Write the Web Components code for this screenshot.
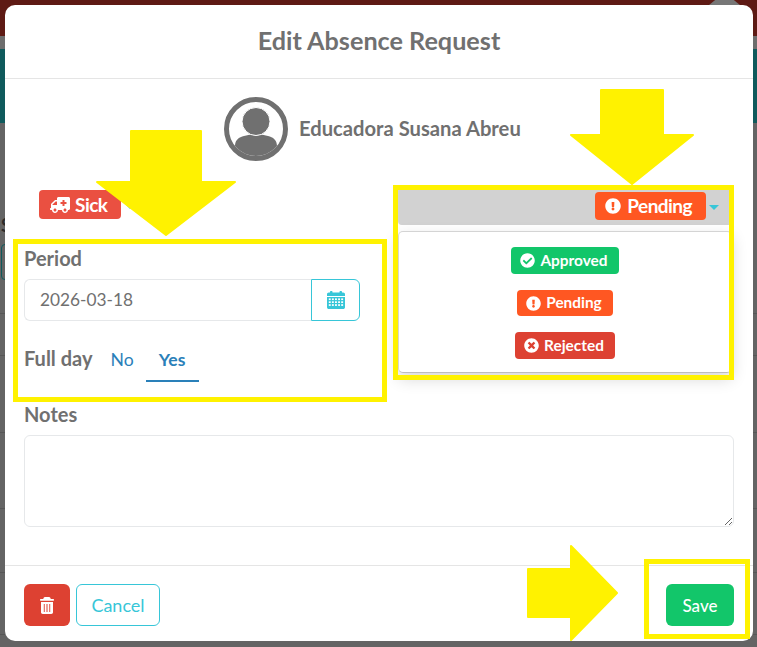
<!DOCTYPE html>
<html lang="en">
<head>
<meta charset="utf-8">
<title>Edit Absence Request</title>
<style>
html,body{margin:0;padding:0;width:757px;height:647px;overflow:hidden;font-family:Lato,"Liberation Sans",sans-serif;color:#707070}
</style>
</head>
<body>
<app-backdrop>
  <absence-modal></absence-modal>
  <yellow-arrow dir="down" style="left:96px;top:130px"></yellow-arrow>
  <yellow-arrow dir="down2" style="left:570px;top:89px"></yellow-arrow>
  <yellow-arrow dir="right" style="left:527px;top:545px"></yellow-arrow>
  <yellow-frame style="left:13px;top:239px;width:374px;height:163px"></yellow-frame>
  <yellow-frame style="left:393px;top:185px;width:341px;height:195px"></yellow-frame>
  <yellow-frame style="left:644px;top:559px;width:106px;height:80px"></yellow-frame>
</app-backdrop>

<script>
const ICONS = {
  ambulance:['0 0 640 512','M624 352h-16V243.9c0-12.7-5.1-24.9-14.1-33.9L494 110.1c-9-9-21.2-14.1-33.9-14.1H416V48c0-26.5-21.5-48-48-48H48C21.5 0 0 21.5 0 48v320c0 26.5 21.5 48 48 48h16c0 53 43 96 96 96s96-43 96-96h128c0 53 43 96 96 96s96-43 96-96h48c8.8 0 16-7.2 16-16v-32c0-8.8-7.2-16-16-16zM160 464c-26.5 0-48-21.5-48-48s21.5-48 48-48 48 21.5 48 48-21.5 48-48 48zm144-248c0 4.4-3.6 8-8 8h-56v56c0 4.4-3.6 8-8 8h-48c-4.4 0-8-3.6-8-8v-56h-56c-4.4 0-8-3.6-8-8v-48c0-4.4 3.6-8 8-8h56v-56c0-4.4 3.6-8 8-8h48c4.4 0 8 3.6 8 8v56h56c4.4 0 8 3.6 8 8v48zm176 248c-26.5 0-48-21.5-48-48s21.5-48 48-48 48 21.5 48 48-21.5 48-48 48zm80-208H416V144h44.1l99.9 99.9V256z'],
  check:['0 0 512 512','M504 256c0 136.967-111.033 248-248 248S8 392.967 8 256 119.033 8 256 8s248 111.033 248 248zM227.314 387.314l184-184c6.248-6.248 6.248-16.379 0-22.627l-22.627-22.627c-6.248-6.249-16.379-6.249-22.628 0L216 308.118l-70.059-70.059c-6.248-6.248-16.379-6.248-22.628 0l-22.627 22.627c-6.248 6.248-6.248 16.379 0 22.627l104 104c6.249 6.249 16.379 6.249 22.628.001z'],
  excl:['0 0 512 512','M504 256c0 136.997-111.043 248-248 248S8 392.997 8 256C8 119.083 119.043 8 256 8s248 111.083 248 248zm-248 50c-25.405 0-46 20.595-46 46s20.595 46 46 46 46-20.595 46-46-20.595-46-46-46zm-43.673-165.346l7.418 136c.347 6.364 5.609 11.346 11.982 11.346h48.546c6.373 0 11.635-4.982 11.982-11.346l7.418-136c.375-6.874-5.098-12.654-11.982-12.654h-63.383c-6.884 0-12.356 5.78-11.981 12.654z'],
  times:['0 0 512 512','M256 8C119 8 8 119 8 256s111 248 248 248 248-111 248-248S393 8 256 8zm121.6 313.1c4.7 4.7 4.7 12.3 0 17L338 377.6c-4.7 4.7-12.3 4.7-17 0L256 312l-65.1 65.6c-4.7 4.7-12.3 4.7-17 0L134.4 338c-4.7-4.7-4.7-12.3 0-17l65.6-65-65.6-65.1c-4.7-4.7-4.7-12.3 0-17l39.6-39.6c4.7-4.7 12.3-4.7 17 0l65 65.7 65.1-65.6c4.7-4.7 12.3-4.7 17 0l39.6 39.6c4.7 4.7 4.7 12.3 0 17L312 256l65.6 65.1z']
};
function faSvg(name,size,extra=''){
  const [vb,d]=ICONS[name];
  return `<svg viewBox="${vb}" height="${size}" fill="currentColor" style="display:block;flex:none;${extra}"><path fill-rule="evenodd" d="${d}"/></svg>`;
}

class AppBackdrop extends HTMLElement{
  constructor(){super();this.attachShadow({mode:'open'}).innerHTML=`<style>
    :host{display:flex;position:relative;box-sizing:border-box;width:757px;height:647px;padding:5px 4px 6px 5px;overflow:hidden;
      background:
       linear-gradient(#565656,#565656) 0 313px/100% 1px no-repeat,
       linear-gradient(#565656,#565656) 0 355px/100% 1px no-repeat,
       linear-gradient(#565656,#565656) 0 432px/100% 1px no-repeat,
       linear-gradient(#565656,#565656) 0 508px/100% 1px no-repeat,
       linear-gradient(#565656,#565656) 0 572px/100% 1px no-repeat,
       linear-gradient(#565656,#565656) 0 634px/100% 1px no-repeat,
       linear-gradient(#5e1a14 0 36px,#6d6d6d 36px 49px,#0f5a5c 49px 123px,#646464 123px);}
    .cap{position:absolute;left:709px;top:0;width:31px;height:5px;background:#777;clip-path:polygon(20% 0,80% 0,100% 100%,0 100%)}
    .s{position:absolute;left:1px;top:214px;font:bold 18px Lato,sans-serif;color:#2b2b2b}
    .box{position:absolute;left:1px;top:244px;width:12px;height:36px;border:1px solid #0f5a5c;border-radius:4px;box-sizing:border-box}
  </style><div class="cap"></div><div class="s">S</div><div class="box"></div><slot></slot>`;}
}

class YellowFrame extends HTMLElement{
  constructor(){super();this.attachShadow({mode:'open'}).innerHTML=`<style>
    :host{display:block;position:absolute;box-sizing:border-box;border:5px solid #fff200;pointer-events:none}
  </style>`;}
}

class YellowArrow extends HTMLElement{
  connectedCallback(){
    const shapes={
      down:[142,107,'1,52 35,52 35,1 105,1 105,52 139,52 70,105'],
      down2:[126,97,'1,46 31,46 31,1 93,1 93,46 123,46 62,95'],
      right:[92,97,'1,24 44,24 44,1 90,48 44,95 44,72 1,72']
    }[this.getAttribute('dir')];
    this.attachShadow({mode:'open'}).innerHTML=`<style>:host{display:block;position:absolute;pointer-events:none}svg{display:block}</style>
    <svg width="${shapes[0]}" height="${shapes[1]}" viewBox="0 0 ${shapes[0]} ${shapes[1]}"><polygon points="${shapes[2]}" fill="#fff200" stroke="#fff200" stroke-width="2" stroke-linejoin="round"/></svg>`;
  }
}

class StatusBadge extends HTMLElement{
  connectedCallback(){
    const icon=this.getAttribute('icon'), sz=+this.getAttribute('isize')||15, flip=this.hasAttribute('flip');
    this.attachShadow({mode:'open'}).innerHTML=`<style>
      :host{display:inline-flex;align-items:center;box-sizing:border-box;border-radius:4px;color:#fff;font-weight:700;white-space:nowrap;
        background:var(--bg);height:var(--h,27px);padding:0 var(--pr,11px) 0 var(--px,9px);gap:var(--gap,5px);font-size:var(--fs,15.4px);letter-spacing:var(--ls,0);line-height:1}
    </style>${faSvg(icon,sz,flip?'transform:scaleX(-1);':'')}<slot></slot>`;
  }
}

class StatusDropdown extends HTMLElement{
  constructor(){super();this.attachShadow({mode:'open'}).innerHTML=`<style>
    :host{display:block}
    .head{display:flex;justify-content:flex-end;align-items:center;height:39px;background:#d2d2d2;border-radius:4px;padding-right:13px;box-sizing:border-box}
    .big{--bg:#ff5722;--h:28px;--px:10px;--pr:14px;--gap:6px;--fs:19px;--ls:-.55px}
    .caret{width:0;height:0;border:5px solid transparent;border-top:5px solid #37c6d8;border-bottom:0;margin:3px 0 0 3px}
    .menu{display:flex;flex-direction:column;align-items:center;gap:16px;box-sizing:border-box;margin-top:6px;height:142px;padding-top:15px;background:#fff;
      border:1px solid #d4d4d4;border-bottom-color:#bdbdbd;border-radius:5px;box-shadow:0 6px 16px rgba(0,0,0,.16)}
    .a{--bg:#12c66a}.p{--bg:#ff5722;--h:26px}.r{--bg:#dd4132}
  </style>
  <div class="head"><status-badge class="big" icon="excl" isize="16">Pending</status-badge><span class="caret"></span></div>
  <div class="menu">
    <status-badge class="a" icon="check">Approved</status-badge>
    <status-badge class="p" icon="excl">Pending</status-badge>
    <status-badge class="r" icon="times">Rejected</status-badge>
  </div>`;}
}

class PeriodField extends HTMLElement{
  constructor(){super();
    let dots='';
    for(let y=0;y<3;y++)for(let x=0;x<5;x++)dots+=`<rect x="${1.8+x*3.1}" y="${7.4+y*2.9}" width="1.9" height="1.7" fill="#fff"/>`;
    this.attachShadow({mode:'open'}).innerHTML=`<style>
    :host{display:block}
    .lab{font-size:20px;line-height:24px;font-weight:700;color:#707070}
    .row{display:flex;height:42px;margin-top:9px}
    .inp{flex:1;box-sizing:border-box;border:1px solid #e6e8ea;border-right:0;border-radius:6px 0 0 6px;padding-left:15px;font-size:17.3px;line-height:40px;color:#707070}
    .btn{box-sizing:border-box;width:49px;border:1px solid #37c6d8;border-radius:0 6px 6px 0;display:flex;align-items:center;justify-content:center}
    .day{display:flex;align-items:center;height:44px;margin-top:17px}
    .day .t{font-size:20px;font-weight:700;color:#707070;margin-right:3px;margin-top:-4px}
    .tab{box-sizing:border-box;height:44px;line-height:44px;padding:0 14px 0 15px;font-size:17.6px;color:#2a80b9}
    .tab.on{font-weight:700;border-bottom:2px solid #2a80b9;margin-left:-2px;width:53px;padding:0;text-align:center}
  </style>
  <div class="lab">Period</div>
  <div class="row"><div class="inp">2026-03-18</div><div class="btn">
    <svg width="18" height="18" viewBox="0 0 18 18"><path fill="#37c6d8" d="M0 16.2V6h18v10.2c0 1-.8 1.8-1.8 1.8H1.8C.8 18 0 17.2 0 16.2zM0 5V3.4c0-1 .8-1.8 1.8-1.8H3V.8C3 .4 3.4 0 3.8 0h.9c.4 0 .8.4.8.8v.8h7V.8c0-.4.4-.8.8-.8h.9c.4 0 .8.4.8.8v.8h1.2c1 0 1.8.8 1.8 1.8V5z"/>${dots}</svg>
  </div></div>
  <div class="day"><span class="t">Full day</span><span class="tab">No</span><span class="tab on">Yes</span></div>`;}
}

class AbsenceModal extends HTMLElement{
  constructor(){super();this.attachShadow({mode:'open'}).innerHTML=`<style>
    :host{display:flex;position:relative;flex-direction:column;flex:1;background:#fff;border-radius:10px;font-family:Lato,"Liberation Sans",sans-serif;color:#707070;overflow:hidden}
    header{flex:none;height:74px;box-sizing:border-box;border-bottom:1px solid #e5e5e5;display:flex;align-items:center;justify-content:center;font-size:25.2px;font-weight:700;padding-bottom:4px}
    main{flex:1;padding:18px 19px 0}
    .user{display:flex;align-items:center;gap:11px;height:64px;padding-left:200px}
    .name{font-size:20.2px;font-weight:700;padding-bottom:2px}
    .cols{display:grid;grid-template-columns:336px 334px;column-gap:38px;margin-top:25px}
    .sickrow{display:flex;align-items:center;margin:4px 0 27px 15px}
    .sick{--bg:#ea5041;--h:29px;--px:11px;--pr:13px;--gap:5px;--fs:19px;--ls:-.5px}
    .sickcaret{width:0;height:0;border:5px solid transparent;border-top:5px solid #37c6d8;border-bottom:0;margin:3px 0 0 4px}
    .lab{font-size:20px;line-height:24px;font-weight:700;margin-top:20px}
    textarea{display:block;box-sizing:border-box;width:710px;height:92px;margin-top:9px;border:1px solid #e6e8ea;border-radius:6px;outline:0;background:#fff;padding:8px}
    footer{flex:none;height:76px;box-sizing:border-box;border-top:1px solid #e5e5e5;padding:18px 19px 15px;display:flex;gap:6px}
    .b{box-sizing:border-box;height:42px;border-radius:6px;display:flex;align-items:center;justify-content:center;font-size:18px}
    .del{width:46px;background:#dd4132}
    .cancel{width:84px;border:1px solid #37c6d8;color:#37c6d8}
    .save{width:68px;background:#12c66a;color:#fff;margin-left:auto;font-weight:500;font-size:17px}
  </style>
  <header>Edit Absence Request</header>
  <main>
    <div class="user">
      <svg width="64" height="64" viewBox="0 0 64 64"><defs><clipPath id="c"><circle cx="32" cy="32" r="27"/></clipPath></defs>
        <circle cx="32" cy="32" r="29.5" fill="none" stroke="#707070" stroke-width="5"/>
        <path clip-path="url(#c)" fill="#707070" d="M11 64V49c0-6 4-9 9-10 3-.6 6-1.500 7-1.500 3 1.500 7 1.500 10 0 1 0 4 .9 7 1.500 5 1 9 4 9 10v15z"/>
        <circle cx="32" cy="24.500" r="14" fill="#707070" stroke="#fff" stroke-width="1"/></svg>
      <span class="name">Educadora Susana Abreu</span>
    </div>
    <div class="cols">
      <div>
        <div class="sickrow"><status-badge class="sick" icon="ambulance" isize="16" flip>Sick</status-badge><span class="sickcaret"></span></div>
        <period-field></period-field>
      </div>
      <status-dropdown></status-dropdown>
    </div>
    <div class="lab">Notes</div>
    <textarea aria-label="Notes"></textarea>
  </main>
  <footer>
    <div class="b del"><svg width="14" height="17" viewBox="0 0 14 17"><path fill="#fff" fill-rule="evenodd" d="M5 0h4c.6 0 1 .3 1.300.8l.5 1.100H13.300c.4 0 .7.3.7.700v.7c0 .3-.2.500-.5.500H.5C.2 3.800 0 3.600 0 3.300v-.7c0-.4.300-.7.700-.7h2.500l.5-1.100C4 .3 4.400 0 5 0zM1 5h12v10.300c0 .9-.8 1.700-1.700 1.700H2.700C1.800 17 1 16.200 1 15.300zM3.800 7v8h.9V7zm2.700 0v8h1V7zm2.800 0v8h.9V7z"/></svg></div>
    <div class="b cancel">Cancel</div>
    <div class="b save">Save</div>
  </footer>`;}
}

customElements.define('status-badge',StatusBadge);
customElements.define('status-dropdown',StatusDropdown);
customElements.define('period-field',PeriodField);
customElements.define('absence-modal',AbsenceModal);
customElements.define('yellow-frame',YellowFrame);
customElements.define('yellow-arrow',YellowArrow);
customElements.define('app-backdrop',AppBackdrop);
</script>
</body>
</html>
